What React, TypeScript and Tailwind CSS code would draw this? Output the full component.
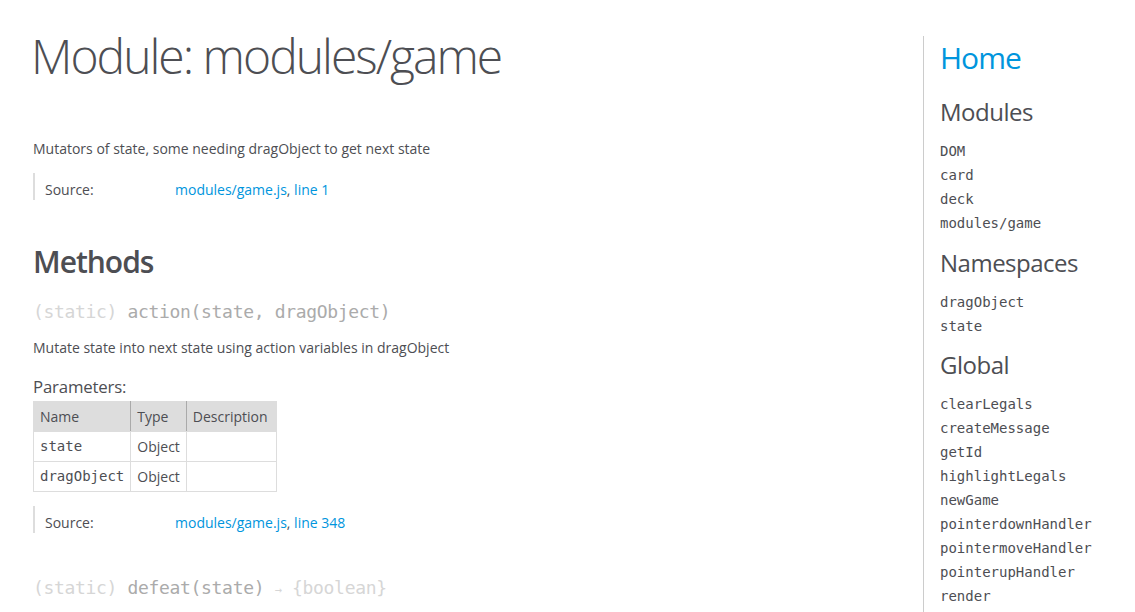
import React from "react";

const mono = "font-['DejaVu_Sans_Mono','Liberation_Mono',monospace]";

function Source({ line }: { line: string }) {
  return (
    <div className="flex border-l-2 border-[#dddddd]">
      <div className="w-[140px] pl-[10px] pt-[6px] leading-[21px]">Source:</div>
      <div className="pt-[6px] leading-[21px]">
        <a className="text-[#0095dd]">modules/game.js</a>, <a className="text-[#0095dd]">line {line}</a>
      </div>
    </div>
  );
}

const navGroups: { title: string; items: string[]; mt: string }[] = [
  { title: "Modules", items: ["DOM", "card", "deck", "modules/game"], mt: "mt-[18px]" },
  { title: "Namespaces", items: ["dragObject", "state"], mt: "mt-[13px]" },
  {
    title: "Global",
    mt: "mt-[12px]",
    items: [
      "clearLegals",
      "createMessage",
      "getId",
      "highlightLegals",
      "newGame",
      "pointerdownHandler",
      "pointermoveHandler",
      "pointerupHandler",
      "render",
    ],
  },
];

export default function App() {
  return (
    <div className="flex min-h-[612px] bg-white text-[14px] leading-[21px] text-[#4d4e53] font-['Open_Sans',sans-serif] overflow-hidden">
      <main className="w-[923px] shrink-0 pl-[33px]">
        <h1 className="mt-[28px] -ml-[2px] text-[48px] leading-[56px] font-light tracking-[-2px]">
          Module: modules/game
        </h1>
        <p className="mt-[54px]">Mutators of state, some needing dragObject to get next state</p>
        <div className="mt-[14px]">
          <Source line="1" />
        </div>
        <h3 className="mt-[44px] text-[30px] leading-[36px] font-semibold tracking-[-1px]">Methods</h3>
        <h4 className={`mt-[18px] text-[18px] leading-[27px] tracking-[-0.33px] ${mono}`}>
          <span className="text-[#d6d6d6]">(static) </span>
          <span className="text-[#ababab]">action(state, dragObject)</span>
        </h4>
        <p className="mt-[12px]">Mutate state into next state using action variables in dragObject</p>
        <h5 className="mt-[16px] text-[16.8px] leading-[25px] font-normal tracking-[-0.17px]">Parameters:</h5>
        <table className="mt-[2px] border-collapse">
          <thead>
            <tr className="bg-[#dddddd]">
              <th className="border border-[#dddddd] border-r-[#aaaaaa] px-[6px] py-[4px] text-left font-normal">Name</th>
              <th className="border border-[#dddddd] border-r-[#aaaaaa] px-[6px] py-[4px] text-left font-normal">Type</th>
              <th className="border border-[#dddddd] px-[6px] py-[4px] pr-[8px] text-left font-normal">Description</th>
            </tr>
          </thead>
          <tbody>
            <tr>
              <td className={`border border-[#dddddd] px-[6px] py-[4px] ${mono}`}>state</td>
              <td className="border border-[#dddddd] px-[6px] py-[4px]">Object</td>
              <td className="border border-[#dddddd] px-[6px] py-[4px]"></td>
            </tr>
            <tr>
              <td className={`border border-[#dddddd] px-[6px] py-[4px] ${mono}`}>dragObject</td>
              <td className="border border-[#dddddd] px-[6px] py-[4px]">Object</td>
              <td className="border border-[#dddddd] px-[6px] py-[4px]"></td>
            </tr>
          </tbody>
        </table>
        <div className="mt-[14px]">
          <Source line="348" />
        </div>
        <h4 className={`mt-[41px] text-[18px] leading-[27px] tracking-[-0.33px] ${mono}`}>
          <span className="text-[#d6d6d6]">(static) </span>
          <span className="text-[#ababab]">defeat(state)</span>
          <span className="text-[#d6d6d6]"> <span className="text-[12px]">→</span> {"{boolean}"}</span>
        </h4>
      </main>
      <nav className="mt-[36px] flex-1 border-l border-[#cccccc] pl-[16px] pb-[20px]">
        <h2 className="mt-[4px] text-[30px] leading-[36px] tracking-[-1px] font-normal">
          <a className="text-[#0095dd]">Home</a>
        </h2>
        {navGroups.map((g) => (
          <div key={g.title}>
            <h3 className={`${g.mt} text-[24px] leading-[36px] tracking-[-0.5px] font-normal`}>{g.title}</h3>
            <ul className={`pt-[6px] ${mono} text-[14px] leading-[18px]`}>
              {g.items.map((it) => (
                <li key={it} className="mt-[6px]">
                  <a className="text-[#4d4e53]">{it}</a>
                </li>
              ))}
            </ul>
          </div>
        ))}
      </nav>
    </div>
  );
}
